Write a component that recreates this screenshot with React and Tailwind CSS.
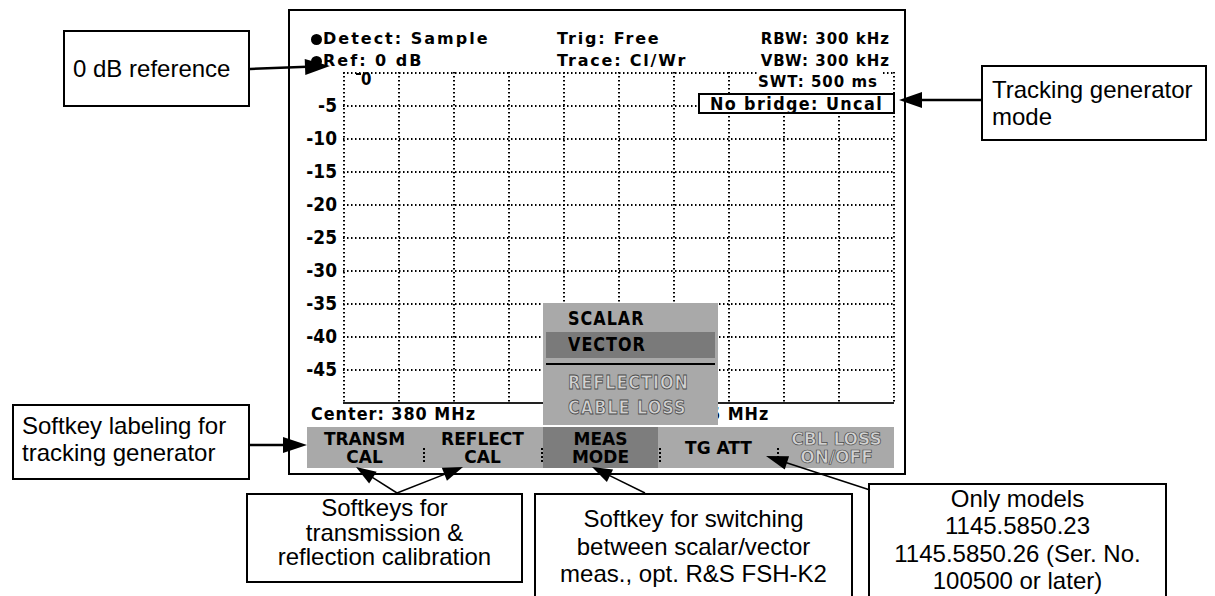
import React from "react";

function Arrow({ x1, y1, x2, y2, len = 22, hw = 8, w = 2 }) {
  const dx = x2 - x1;
  const dy = y2 - y1;
  const L = Math.hypot(dx, dy);
  const ux = dx / L;
  const uy = dy / L;
  const bx = x2 - ux * len;
  const by = y2 - uy * len;
  const px = -uy;
  const py = ux;
  const pts = `${x2},${y2} ${bx + px * hw},${by + py * hw} ${bx - px * hw},${by - py * hw}`;
  return (
    <g>
      <line x1={x1} y1={y1} x2={bx + ux * 2} y2={by + uy * 2} stroke="#000" strokeWidth={w} />
      <polygon points={pts} fill="#000" />
    </g>
  );
}

function Grid() {
  const h = [];
  for (let k = 0; k <= 9; k++) {
    h.push(
      <line key={"h" + k} x1="0" x2="552" y1={33 * k + 1} y2={33 * k + 1} stroke="#000" strokeWidth="2" strokeDasharray="1.5 2.5" />
    );
  }
  const v = [];
  for (let j = 0; j <= 10; j++) {
    v.push(
      <line key={"v" + j} x1={55 * j + 1} x2={55 * j + 1} y1="0" y2="330" stroke="#000" strokeWidth="2" strokeDasharray="1.5 2.5" />
    );
  }
  return (
    <svg width="552" height="332" className="block shrink-0">
      {h}
      {v}
      <line x1="0" x2="551" y1="331" y2="331" stroke="#222" strokeWidth="2" />
    </svg>
  );
}

function Sep() {
  return (
    <div className="flex w-[3px] items-end justify-center pb-[6px]">
      <div className="h-[14px] border-l-2 border-dotted border-black" />
    </div>
  );
}

const dis = "text-[#d2d2d2] [-webkit-text-stroke:0.7px_#4a4a4a]";

function Key({ lines, dark, disabled }) {
  return (
    <div
      className={
        "flex flex-1 flex-col items-center justify-center text-center text-[17px] leading-[18px] " +
        (dark ? "bg-[#7d7d7d] " : "") +
        (disabled ? dis : "text-black")
      }
    >
      {lines.map((l) => (
        <div key={l}>{l}</div>
      ))}
    </div>
  );
}

const labels = ["-5", "-10", "-15", "-20", "-25", "-30", "-35", "-40", "-45"];

export default function App() {
  return (
    <div className="relative h-[596px] w-[1215px] overflow-hidden bg-white">
      {/* Instrument screen */}
      <div className="relative ml-[288px] mt-[9px] flex h-[466px] w-[618px] flex-col border-2 border-black font-['DejaVu_Sans',sans-serif] font-bold text-black">
        {/* header */}
        <div className="pl-[21px] pr-[14px] pt-[17px] text-[15px] leading-[22px] tracking-[1px]">
          <div className="flex items-center">
            <span className="flex w-[246px] items-center">
              <span className="mr-[1px] inline-block h-[11px] w-[11px] rounded-full bg-black" />
              <span className="text-[16px] tracking-[2px]">Detect: Sample</span>
            </span>
            <span className="text-[16px] tracking-[1.8px]">Trig: Free</span>
            <span className="ml-auto">RBW: 300 kHz</span>
          </div>
          <div className="flex items-center">
            <span className="flex w-[246px] items-center">
              <span className="mr-[1px] inline-block h-[11px] w-[11px] rounded-full bg-black" />
              <span className="text-[16px] tracking-[2px]">Ref: 0 dB</span>
            </span>
            <span className="text-[16px] tracking-[1.8px]">Trace: Cl/Wr</span>
            <span className="ml-auto">VBW: 300 kHz</span>
          </div>
        </div>

        {/* chart */}
        <div className="relative flex h-[332px]">
          <div className="flex w-[53px] flex-col pt-[17px]">
            {labels.map((l) => (
              <div key={l} className="flex h-[33px] items-center justify-end pr-[6px] text-[17px] leading-none">
                <span className="inline-block scale-y-115">{l}</span>
              </div>
            ))}
          </div>
          <Grid />
          <div className="absolute left-[66px] top-0 flex items-start">
            <span className="mt-[1px] h-[2px] w-[5px] bg-black" />
            <span className="inline-block origin-top scale-y-120 text-[15px] leading-[13px]">0</span>
          </div>
          <div className="absolute right-[22px] top-0 w-[125px] bg-white pr-[4px] text-right text-[15px] leading-[21px] tracking-[1px]">
            SWT: 500 ms
          </div>
          <div className="absolute left-[408px] top-[21px] flex h-[21px] w-[197px] items-center justify-center border-2 border-black bg-white text-[16px] leading-[17px] tracking-[1.4px]">
            <span className="inline-block scale-y-110">No bridge: Uncal</span>
          </div>
        </div>

        {/* center row */}
        <div className="flex h-[23px] items-start pl-[21px] text-[16px] leading-[20px] tracking-[1px]">
          <span className="inline-block scale-y-115">Center: 380 MHz</span>
          <span className="ml-[233px] inline-block scale-y-115">5 MHz</span>
        </div>

        {/* softkeys */}
        <div className="ml-[17px] mr-[10px] flex h-[41px] bg-[#a9a9a9]">
          <Key lines={["TRANSM", "CAL"]} />
          <Sep />
          <Key lines={["REFLECT", "CAL"]} />
          <Sep />
          <Key dark lines={["MEAS", "MODE"]} />
          <Sep />
          <Key lines={["TG ATT"]} />
          <Sep />
          <Key disabled lines={["CBL LOSS", "ON/OFF"]} />
        </div>

        {/* menu overlay */}
        <div className="absolute left-[253px] top-[292px] flex h-[122px] w-[175px] flex-col bg-[#a9a9a9] px-[3px] pt-[3px] text-[16px] tracking-[1px]">
          <div className="flex h-[26px] items-center pl-[22px]">
            <span className="inline-block scale-y-120">SCALAR</span>
          </div>
          <div className="flex h-[26px] items-center bg-[#7a7a7a] pl-[22px]">
            <span className="inline-block scale-y-120">VECTOR</span>
          </div>
          <div className="mt-[5px] h-[2px] bg-black" />
          <div className={"mt-[5px] flex h-[25px] items-center pl-[22px] " + dis}>
            <span className="inline-block scale-y-120">REFLECTION</span>
          </div>
          <div className={"flex h-[25px] items-center pl-[22px] " + dis}>
            <span className="inline-block scale-y-120">CABLE LOSS</span>
          </div>
        </div>
      </div>

      {/* Callouts */}
      <div className="absolute left-[63px] top-[30px] flex h-[77px] w-[187px] items-center border-2 border-black bg-white pl-[8px] font-['Liberation_Sans',Arial,sans-serif] text-[24px] leading-[27px] text-black">
        0 dB reference
      </div>
      <div className="absolute left-[981px] top-[65px] flex h-[76px] w-[226px] items-center border-2 border-black bg-white pl-[9px] font-['Liberation_Sans',Arial,sans-serif] text-[24px] leading-[27px] text-black">
        <div>
          Tracking generator
          <br />
          mode
        </div>
      </div>
      <div className="absolute left-[12px] top-[404px] h-[76px] w-[238px] border-2 border-black bg-white pl-[8px] pt-[6px] font-['Liberation_Sans',Arial,sans-serif] text-[24px] leading-[27px] text-black">
        Softkey labeling for
        <br />
        tracking generator
      </div>
      <div className="absolute left-[246px] top-[493px] h-[90px] w-[277px] border-2 border-black bg-white pt-[1px] text-center font-['Liberation_Sans',Arial,sans-serif] text-[24px] leading-[24.5px] text-black">
        Softkeys for
        <br />
        transmission &amp;
        <br />
        reflection calibration
      </div>
      <div className="absolute left-[534px] top-[493px] h-[110px] w-[319px] border-2 border-black bg-white pt-[10px] text-center font-['Liberation_Sans',Arial,sans-serif] text-[24px] leading-[27.5px] text-black">
        Softkey for switching
        <br />
        between scalar/vector
        <br />
        meas., opt. R&amp;S FSH-K2
      </div>
      <div className="absolute left-[868px] top-[483px] h-[125px] w-[299px] border-2 border-black bg-white text-center font-['Liberation_Sans',Arial,sans-serif] text-[24px] leading-[27.3px] text-black">
        Only models
        <br />
        1145.5850.23
        <br />
        1145.5850.26 (Ser. No.
        <br />
        100500 or later)
      </div>

      {/* Arrows */}
      <svg className="pointer-events-none absolute left-0 top-0" width="1215" height="596">
        <Arrow x1={250} y1={69} x2={330} y2={66} len={25} hw={8} w={2.5} />
        <Arrow x1={981} y1={100} x2={899} y2={100} len={23} hw={8} w={2.5} />
        <Arrow x1={250} y1={445} x2={307} y2={445} len={24} hw={8} w={2.5} />
        <Arrow x1={397} y1={493} x2={356} y2={467} len={20} hw={7} w={1.5} />
        <Arrow x1={397} y1={493} x2={463} y2={467} len={20} hw={7} w={1.5} />
        <Arrow x1={645} y1={493} x2={592} y2={467} len={20} hw={7} w={1.5} />
        <Arrow x1={870} y1={490} x2={766} y2={456} len={22} hw={7} w={1.5} />
      </svg>
    </div>
  );
}
